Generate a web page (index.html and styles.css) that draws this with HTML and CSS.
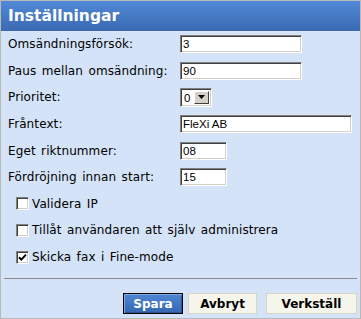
FILE: index.html
```html
<!DOCTYPE html>
<html lang="sv">
<head>
<meta charset="utf-8">
<title>Inställningar</title>
<link rel="stylesheet" href="styles.css">
</head>
<body>
<div class="dialog">
  <div class="header"><h1 class="title">Inställningar</h1></div>
  <div class="form">
    <div class="row"><span class="label">Omsändningsförsök:</span><input class="field w-md" type="text" value="3"></div>
    <div class="row"><span class="label">Paus mellan omsändning:</span><input class="field w-md" type="text" value="90"></div>
    <div class="row"><span class="label">Prioritet:</span>
      <span class="select"><span class="select-value">0</span><span class="select-btn"><svg width="8" height="5" viewBox="0 0 8 5"><path d="M0 0H7L3.5 4Z" fill="#000"/></svg></span></span>
    </div>
    <div class="row"><span class="label">Fråntext:</span><input class="field w-lg" type="text" value="FleXi AB"></div>
    <div class="row"><span class="label">Eget riktnummer:</span><input class="field w-sm" type="text" value="08"></div>
    <div class="row"><span class="label">Fördröjning innan start:</span><input class="field w-sm" type="text" value="15"></div>
    <div class="row check"><span class="cb"></span><span class="label">Validera IP</span></div>
    <div class="row check"><span class="cb"></span><span class="label">Tillåt användaren att själv administrera</span></div>
    <div class="row check"><span class="cb"><svg width="9" height="9" viewBox="0 0 9 9"><path d="M1 4.2L3.3 6.6L8 1.6" fill="none" stroke="#000" stroke-width="2"/></svg></span><span class="label">Skicka fax i Fine-mode</span></div>
  </div>
  <div class="sep"></div>
  <div class="buttons">
    <button class="btn btn-primary w-spara">Spara</button>
    <button class="btn w-avbryt">Avbryt</button>
    <button class="btn w-verk">Verkställ</button>
  </div>
</div>
</body>
</html>
```
FILE: styles.css
```css
html, body {
  margin: 0;
  padding: 0;
  background: #d4e3f7;
}
.dialog {
  width: 361px;
  height: 319px;
  box-sizing: border-box;
  border: 1px solid #b8b8b8;
  background: #d4e3f7;
  font-family: "DejaVu Sans", Verdana, sans-serif;
  font-size: 12px;
  color: #000;
}
.header {
  height: 30px;
  background: linear-gradient(#5189d6, #3a69b2);
  display: flex;
  align-items: center;
  padding-left: 7px;
}
.title {
  margin: 0;
  color: #fff;
  font-size: 15.5px;
  font-weight: bold;
  font-family: "DejaVu Sans", Verdana, sans-serif;
}
.form {
  display: grid;
  grid-auto-rows: 26.6px;
  padding: 0 7px;
}
.row {
  display: grid;
  grid-template-columns: 172px auto;
  align-items: center;
}
.row.check {
  display: flex;
  align-items: center;
  padding-left: 8px;
  gap: 3px;
}
.label {
  white-space: nowrap;
  letter-spacing: 0.1px;
  word-spacing: 1.5px;
}
.field {
  box-sizing: border-box;
  height: 18px;
  margin: 0;
  padding: 0 2px;
  font-family: "Liberation Sans", Arial, sans-serif;
  font-size: 11.5px;
  color: #000;
  background: #fff;
  border-style: solid;
  border-width: 1px;
  border-color: #808080 #fff #fff #808080;
  box-shadow: inset 1px 1px 0 #404040, inset -1px -1px 0 #d4d0c8;
  outline: none;
}
.w-sm { width: 47px; }
.w-md { width: 122px; }
.w-lg { width: 172px; }
.select {
  box-sizing: border-box;
  width: 32px;
  height: 19px;
  display: flex;
  align-items: stretch;
  background: #fff;
  border-style: solid;
  border-width: 1px;
  border-color: #808080 #fff #fff #808080;
  box-shadow: inset 1px 1px 0 #404040, inset -1px -1px 0 #d4d0c8;
  padding: 2px;
}
.select-value {
  flex: 1;
  font-family: "Liberation Sans", Arial, sans-serif;
  font-size: 11.5px;
  line-height: 15px;
  padding-left: 1px;
}
.select-btn {
  width: 15px;
  box-sizing: border-box;
  background: #d4d0c8;
  border-style: solid;
  border-width: 1px;
  border-color: #fff #404040 #404040 #fff;
  display: flex;
  align-items: center;
  justify-content: center;
}
.cb {
  box-sizing: border-box;
  width: 13px;
  height: 13px;
  background: #fff;
  border-style: solid;
  border-width: 1px;
  border-color: #808080 #fff #fff #808080;
  box-shadow: inset 1px 1px 0 #404040, inset -1px -1px 0 #d4d0c8;
  display: flex;
  align-items: center;
  justify-content: center;
}
.sep {
  height: 0;
  border-top: 1px solid #8a8a8a;
  margin: 8px 3px 0 3px;
}
.buttons {
  display: flex;
  justify-content: flex-end;
  padding: 14px 3px 0 0;
}
.btn {
  box-sizing: border-box;
  height: 21px;
  margin: 0 0 0 5px;
  padding: 0;
  font-family: "DejaVu Sans", Verdana, sans-serif;
  font-size: 12px;
  font-weight: bold;
  color: #000;
  background: #f6f5ec;
  border: 1px solid #d9d5c2;
}
.btn-primary {
  color: #fff;
  background: linear-gradient(#4f86d3, #3567b0);
  border: 1px solid #000;
  box-shadow: inset 1px 1px 0 #7fa7e0, inset -1px -1px 0 #2a5596;
}
.w-spara { width: 60px; }
.w-avbryt { width: 69px; }
.w-verk { width: 91px; margin-left: 9px; }
```
